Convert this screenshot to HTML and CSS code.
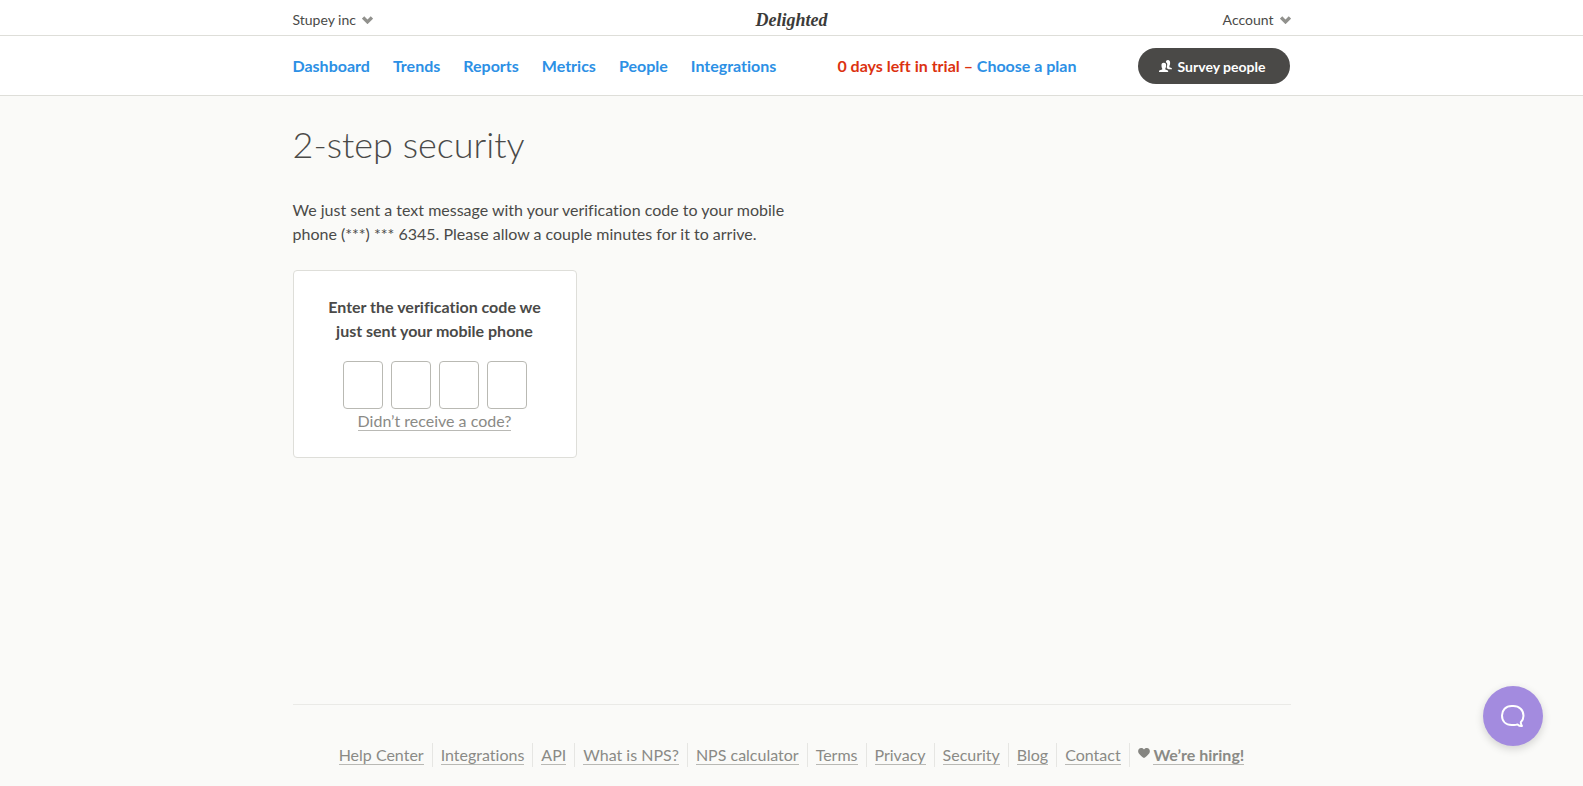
FILE: index.html
```html
<!DOCTYPE html>
<html lang="en">
<head>
  <meta charset="UTF-8">
  <title>2-step security | Delighted</title>
  <meta name="viewport" content="width=device-width, initial-scale=1.0">
  <link rel="stylesheet" href="styles.css">
</head>
<body>

  <!-- Account bar -->
  <header class="topbar">
    <div class="container topbar-inner">
      <button class="menu-btn" type="button">Stupey inc
        <svg class="chevron" viewBox="0 0 10 7" aria-hidden="true"><path d="M1 1.2 5 5.2 9 1.2"/></svg>
      </button>
      <a class="logo" href="#">Delighted</a>
      <button class="menu-btn menu-btn-right" type="button">Account
        <svg class="chevron" viewBox="0 0 10 7" aria-hidden="true"><path d="M1 1.2 5 5.2 9 1.2"/></svg>
      </button>
    </div>
  </header>

  <!-- Main navigation -->
  <div class="navbar">
    <div class="container navbar-inner">
      <nav class="nav">
        <a href="#">Dashboard</a>
        <a href="#">Trends</a>
        <a href="#">Reports</a>
        <a href="#">Metrics</a>
        <a href="#">People</a>
        <a href="#">Integrations</a>
      </nav>
      <p class="trial">0 days left in trial – <a href="#">Choose a plan</a></p>
      <button class="survey-btn" type="button">
        <svg class="people" viewBox="0 0 13 12" aria-hidden="true">
          <path d="M8.800 0C10.600 0 11.300 1.300 11.100 3.400C11 4.600 10.700 5.200 10.400 5.800V7.200L12.400 8C12.900 8.200 13 8.600 13 9.200H9.500L7.800 8.200V6.400C8.300 5.600 8.400 4.600 8.100 3.600C7.900 2.900 7.500 2.500 6.800 2.200C7 0.800 7.700 0 8.800 0Z"/>
          <path d="M4.800 2.800C6.600 2.800 7.300 4 7.100 6C7 7.200 6.700 7.800 6.300 8.400V9.500L8.400 10.300C9 10.600 9.200 11 9.200 12H0C0 11 0.200 10.600 0.800 10.300L3.200 9.500V8.400C2.800 7.800 2.600 7.200 2.500 6C2.300 4 3 2.800 4.800 2.800Z"/>
        </svg>
        Survey people
      </button>
    </div>
  </div>

  <main class="container main">
    <h1>2-step security</h1>
    <p class="intro">We just sent a text message with your verification code to your mobile phone (***) *** 6345. Please allow a couple minutes for it to arrive.</p>

    <form class="card">
      <h2>Enter the verification code we just sent your mobile phone</h2>
      <div class="code">
        <input type="text" maxlength="1" inputmode="numeric" aria-label="Digit 1">
        <input type="text" maxlength="1" inputmode="numeric" aria-label="Digit 2">
        <input type="text" maxlength="1" inputmode="numeric" aria-label="Digit 3">
        <input type="text" maxlength="1" inputmode="numeric" aria-label="Digit 4">
      </div>
      <a class="soft-link" href="#">Didn’t receive a code?</a>
    </form>
  </main>

  <footer class="container footer">
    <ul class="footer-links">
      <li><a class="soft-link" href="#">Help Center</a></li>
      <li><a class="soft-link" href="#">Integrations</a></li>
      <li><a class="soft-link" href="#">API</a></li>
      <li><a class="soft-link" href="#">What is NPS?</a></li>
      <li><a class="soft-link" href="#">NPS calculator</a></li>
      <li><a class="soft-link" href="#">Terms</a></li>
      <li><a class="soft-link" href="#">Privacy</a></li>
      <li><a class="soft-link" href="#">Security</a></li>
      <li><a class="soft-link" href="#">Blog</a></li>
      <li><a class="soft-link" href="#">Contact</a></li>
      <li class="hiring">
        <svg class="heart" viewBox="0 0 12 10" aria-hidden="true"><path d="M6 10C4.500 9 1.800 7 0.700 5.200C-0.600 3 0.400 0 3.200 0C4.600 0 5.600 0.700 6 1.600C6.400 0.700 7.400 0 8.800 0C11.600 0 12.600 3 11.300 5.200C10.200 7 7.500 9 6 10Z"/></svg>
        <a class="soft-link" href="#">We’re hiring!</a>
      </li>
    </ul>
  </footer>

  <button class="chat" type="button" aria-label="Open chat">
    <svg viewBox="0 0 26 24" aria-hidden="true"><path d="M20.800 18.200C22.600 16.400 23.500 14.200 23.500 11.700C23.500 6 19.300 2 13.300 2H11.700C5.700 2 2 6 2 11.500C2 17.200 5.700 21 11.700 21H14C15.300 21 16.500 20.800 17.500 20.400C19 21.800 20.500 22.200 22 22C21.200 20.800 20.800 19.600 20.800 18.200Z"/></svg>
  </button>

</body>
</html>
```
FILE: styles.css
```css
* {
  box-sizing: border-box;
}

body {
  margin: 0;
  min-height: 100vh;
  display: flex;
  flex-direction: column;
  font-family: Lato, "Open Sans", sans-serif;
  font-size: 16px;
  font-variant-ligatures: none;
  line-height: 24px;
  color: #4a4a48;
  background: #fafaf8;
}

a {
  color: #2c90e5;
  text-decoration: none;
}

button {
  font-family: inherit;
  cursor: pointer;
}

.container {
  width: 100%;
  max-width: 998px;
  margin: 0 auto;
}

/* Account bar */
.topbar {
  background: #fff;
  border-bottom: 1px solid #deded9;
}

.topbar-inner {
  display: grid;
  grid-template-columns: 1fr auto 1fr;
  align-items: center;
  height: 35px;
  padding-top: 4px;
}

.menu-btn {
  display: flex;
  align-items: center;
  justify-self: start;
  gap: 6px;
  padding: 0;
  border: 0;
  background: none;
  font-size: 14px;
  line-height: 24px;
  color: #4a4a48;
}

.menu-btn-right {
  justify-self: end;
}

.chevron {
  width: 11px;
  height: 8px;
  fill: none;
  stroke: #91918d;
  stroke-width: 3;
}

.logo {
  font-family: "Liberation Serif", serif;
  font-size: 18px;
  font-style: italic;
  font-weight: bold;
  color: #3b3b39;
}

/* Navigation */
.navbar {
  background: #fff;
  border-bottom: 1px solid #deded9;
}

.navbar-inner {
  display: flex;
  align-items: center;
  justify-content: space-between;
  padding: 12px 0 11px;
  font-weight: bold;
}

.nav {
  display: flex;
  gap: 23px;
}

.trial {
  margin: 0;
  color: #dc3210;
}

.survey-btn {
  display: flex;
  align-items: center;
  gap: 6px;
  height: 36px;
  padding: 0 25px 0 21px;
  border: 0;
  border-radius: 18px;
  background: #4a4947;
  color: #fff;
  font-size: 14px;
  font-weight: bold;
}

.people {
  width: 13px;
  height: 12px;
  fill: #fff;
}

/* Content */
.main {
  flex: 1;
  padding-top: 28px;
}

h1 {
  margin: 0 0 34px;
  font-size: 36px;
  line-height: 40px;
  font-weight: 300;
}

.intro {
  max-width: 500px;
  margin: 0 0 24px;
}

.card {
  width: 284px;
  padding: 24px;
  border: 1px solid #deded9;
  border-radius: 4px;
  background: #fff;
  text-align: center;
}

.card h2 {
  margin: 0 0 18px;
  font-size: 16px;
  line-height: 24px;
}

.code {
  display: flex;
  justify-content: center;
  gap: 8px;
}

.code input {
  width: 40px;
  height: 48px;
  padding: 0;
  border: 1px solid #b9b9b3;
  border-radius: 4px;
  background: #fff;
  font: inherit;
  font-size: 24px;
  text-align: center;
}

.soft-link {
  color: #8a8a86;
  border-bottom: 1px solid #b9b9b5;
}

/* Footer */
.footer {
  padding: 38px 0 19px;
  border-top: 1px solid #eaeae7;
}

.footer-links {
  display: flex;
  flex-wrap: wrap;
  justify-content: center;
  margin: 0;
  padding: 0;
  list-style: none;
}

.footer-links li {
  padding: 0 8px;
  border-right: 1px solid #e6e6e3;
}

.footer-links .hiring {
  border-right: 0;
  font-weight: bold;
}

.heart {
  width: 12px;
  height: 10px;
  vertical-align: 3px;
  fill: #858581;
}

/* Chat launcher */
.chat {
  position: fixed;
  right: 40px;
  bottom: 40px;
  display: flex;
  align-items: center;
  justify-content: center;
  width: 60px;
  height: 60px;
  padding: 0;
  border: 0;
  border-radius: 50%;
  background: #a38bdf;
  box-shadow: 0 3px 8px rgba(0, 0, 0, 0.16);
}

.chat svg {
  width: 26px;
  height: 24px;
  fill: none;
  stroke: #fff;
  stroke-width: 2;
  stroke-linejoin: round;
}
```
